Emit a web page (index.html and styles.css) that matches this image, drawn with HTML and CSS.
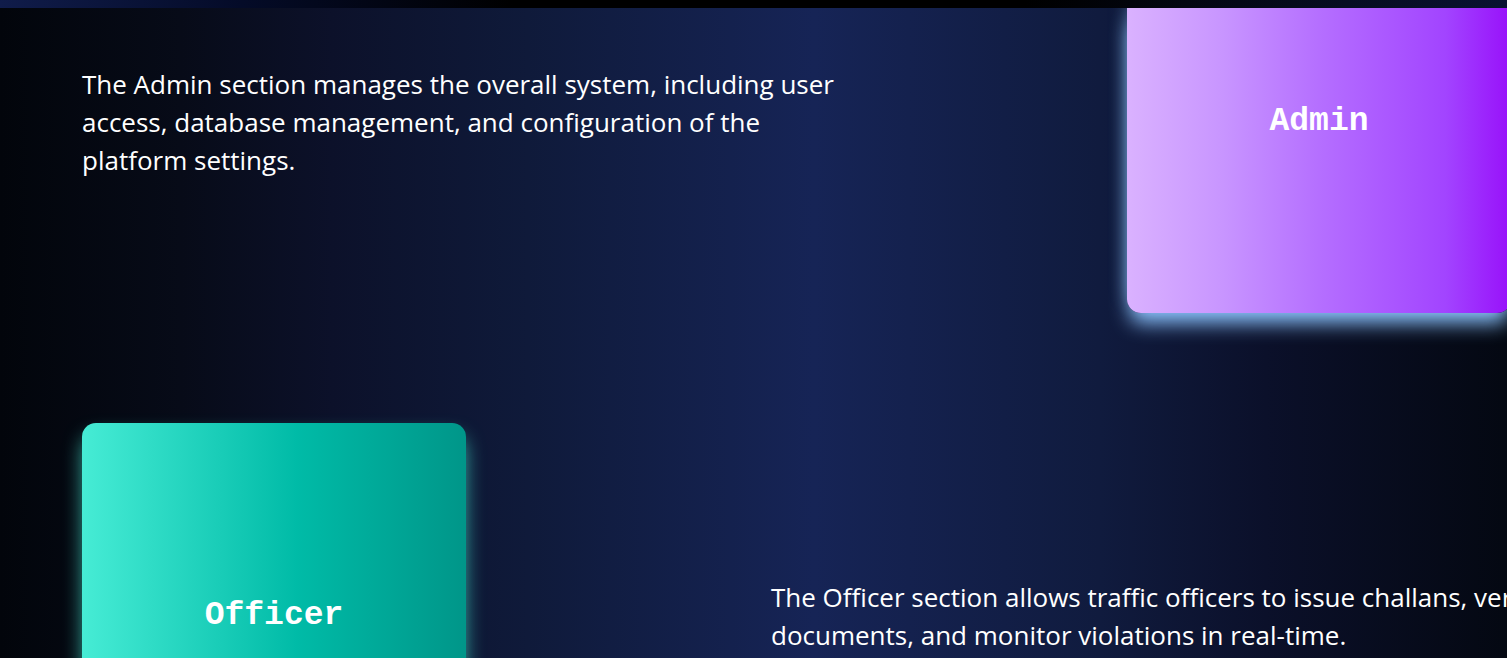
FILE: index.html
```
<!DOCTYPE html>
<html lang="en">
<head>
<meta charset="utf-8">
<title>Sections</title>
<link rel="stylesheet" href="styles.css">
</head>
<body>
<header class="topbar"></header>
<main class="sections">
  <section class="row">
    <p class="description">The Admin section manages the overall system, including user access, database management, and configuration of the platform settings.</p>
    <a class="card card-admin" href="#admin">Admin</a>
  </section>
  <section class="row row-officer">
    <a class="card card-officer" href="#officer">Officer</a>
    <p class="description description-officer">The Officer section allows traffic officers to issue challans, verify documents, and monitor violations in real-time.</p>
  </section>
</main>
</body>
</html>
```

FILE: styles.css
```
* {
  box-sizing: border-box;
}

body {
  margin: 0;
  height: 100vh;
  overflow: hidden;
  display: flex;
  flex-direction: column;
  background: #000;
  color: #fff;
  font-family: "Segoe UI", "Open Sans", "Noto Sans", sans-serif;
}

.topbar {
  flex: none;
  height: 8px;
  background: linear-gradient(to right, #101c4a, #040b28 16%, #000 34%, #000 68%, #091232);
}

.sections {
  flex: 1;
  min-height: 0;
  overflow: hidden;
  padding-left: 82px;
  background: linear-gradient(to right, #02050b, #070b18 12%, #0c112a 22%, #0f1a3a 35%, #162456 54%, #101b3e 73%, #0b102a 84%, #040812);
}

.row {
  display: flex;
  justify-content: space-between;
  align-items: flex-start;
}

.row-officer {
  margin-top: 110px;
}

.description {
  flex: none;
  width: 768px;
  margin: 57px 0 0;
  font-size: 26px;
  line-height: 38px;
}

.description-officer {
  width: 800px;
  margin-top: 155px;
  margin-right: -64px;
}

.card {
  flex: none;
  display: flex;
  justify-content: center;
  width: 384px;
  border-radius: 14px;
  color: #fff;
  font: bold 33px/40px "Courier New", "Liberation Mono", monospace;
  text-decoration: none;
}

.card-admin {
  height: 305px;
  margin-right: -4px;
  padding-top: 94px;
  border-radius: 0 0 14px 14px;
  background: linear-gradient(to right, #dab2ff, #c895ff 25%, #b56fff 50%, #a244ff 83%, #9810fa);
  box-shadow: 0 -10px 18px -2px #8ec5ff88, 0 13px 20px -3px #8ec5ff;
}

.card-officer {
  height: 384px;
  padding-top: 173px;
  background: linear-gradient(to right, #46ecd5, #00bba7 56%, #009689);
  box-shadow: 0 12px 20px -2px #46ecd5cc;
}
```
